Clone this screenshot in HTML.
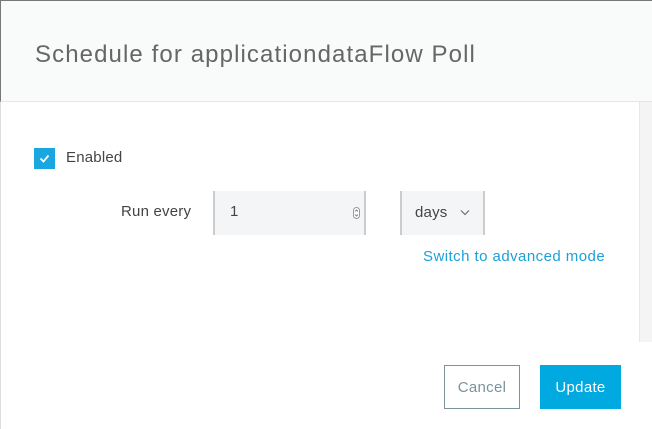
<!DOCTYPE html>
<html><head><style>
*{margin:0;padding:0;box-sizing:border-box}
body{width:652px;height:429px;background:#fff;position:relative;overflow:hidden;font-family:"Liberation Sans",sans-serif}
.hdr{position:absolute;left:0;top:0;width:652px;height:102px;background:#f9fafa;border-top:1px solid #777;border-left:1px solid #777;border-bottom:1px solid #e6e6e6}
.title{position:absolute;left:34px;top:40px;font-size:24px;color:#666;letter-spacing:1.1px}
.leftb{position:absolute;left:0;top:102px;width:1px;height:327px;background:#ddd}
.sb{position:absolute;left:639px;top:102px;width:13px;height:240px;background:#f4f4f4;border-left:1px solid #e8e8e8}
.cb{position:absolute;left:34px;top:148px;width:21px;height:21px;background:#1aa6df}
.t{position:absolute;font-size:15px;color:#444;letter-spacing:0.2px}
.inp{position:absolute;top:191px;height:44px;background:#f4f5f7;border-left:2px solid #ccc;border-right:2px solid #ccc}
.btn{position:absolute;top:365px;height:44px;font-size:15px;display:flex;align-items:center;justify-content:center;letter-spacing:0.3px}
</style></head><body>
<div class="hdr"><div class="title">Schedule for applicationdataFlow Poll</div></div>
<div class="leftb"></div>
<div class="sb"></div>
<div class="cb"><svg width="21" height="21"><path d="M6.5 10.5l3 3 5-6" stroke="#fff" stroke-width="1.8" fill="none"/></svg></div>
<div class="t" style="left:66px;top:149px">Enabled</div>
<div class="t" style="left:121px;top:203px">Run every</div>
<div class="inp" style="left:213px;width:153px"><span class="t" style="left:15px;top:12px">1</span>
<svg style="position:absolute;left:138px;top:16px" width="7" height="12"><rect x="0.5" y="0.5" width="6" height="11" rx="3" fill="#fff" stroke="#999"/><path d="M2 4.5l1.5-1.5 1.5 1.5M2 7.5l1.5 1.5 1.5-1.5" stroke="#666" stroke-width="0.8" fill="none"/></svg></div>
<div class="inp" style="left:400px;width:85px"><span class="t" style="left:13px;top:13px">days</span>
<svg style="position:absolute;left:58px;top:18px" width="10" height="8"><path d="M1 1.5l4 4 4-4" stroke="#666" stroke-width="1.1" fill="none"/></svg></div>
<div class="t" style="left:423px;top:248px;color:#1ba1d8;letter-spacing:0.45px">Switch to advanced mode</div>
<div class="btn" style="left:444px;width:76px;border:1px solid #7a939d;color:#7a939d">Cancel</div>
<div class="btn" style="left:540px;width:81px;background:#00a9e0;color:#fff">Update</div>
</body></html>
